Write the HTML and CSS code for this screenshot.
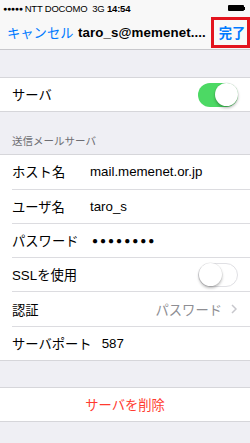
FILE: index.html
```html
<!DOCTYPE html>
<html lang="ja">
<head>
<meta charset="utf-8">
<link rel="stylesheet" href="styles.css">
</head>
<body>
<div class="top">
  <div class="status">
    <span class="dots">●●●●●</span>
    <span class="carrier">NTT DOCOMO&nbsp; 3G <b>14:54</b></span>
    <span class="battery"><span class="batt-body"></span><span class="batt-nub"></span></span>
  </div>
  <div class="nav">
    <span class="cancel">キャンセル</span>
    <span class="title">taro_s@memenet....</span>
    <span class="done">完了</span>
  </div>
</div>

<div class="gap"></div>
<div class="group">
  <div class="row">
    <span class="label">サーバ</span>
    <span class="toggle on"><span class="knob"></span></span>
  </div>
</div>

<div class="header">送信メールサーバ</div>
<div class="group">
  <div class="row sep"><span class="label">ホスト名</span><span class="value">mail.memenet.or.jp</span></div>
  <div class="row sep"><span class="label">ユーザ名</span><span class="value">taro_s</span></div>
  <div class="row sep"><span class="label">パスワード</span><span class="value dots-pw">●●●●●●●●</span></div>
  <div class="row sep"><span class="label">SSLを使用</span><span class="toggle off"><span class="knob"></span></span></div>
  <div class="row sep"><span class="label">認証</span><span class="detail">パスワード</span><span class="chev"><svg width="6" height="10" viewBox="0 0 6 10"><path d="M1 1l4 4-4 4" fill="none" stroke="#c7c7cc" stroke-width="1.5"/></svg></span></div>
  <div class="row"><span class="label">サーバポート</span><span class="value">587</span></div>
</div>

<div class="gap2"></div>
<div class="group">
  <div class="row center"><span class="delete">サーバを削除</span></div>
</div>
</body>
</html>
```

FILE: styles.css
```css
* { box-sizing: border-box; }
html, body {
  margin: 0;
  padding: 0;
  background: #efeff4;
  font-family: "Liberation Sans", "Noto Sans CJK JP", sans-serif;
  color: #000;
}
body { width: 250px; height: 443px; overflow: hidden; }

.top {
  background: #f8f8f8;
  border-bottom: 1px solid #c8c8cc;
}
.status {
  height: 16px;
  display: flex;
  align-items: center;
  font-size: 9.5px;
  padding: 0 5px 0 3px;
}
.dots { font-size: 7px; letter-spacing: -0.3px; margin-right: 2px; }
.carrier { flex: 1; letter-spacing: -0.2px; }
.carrier b { font-weight: bold; }
.battery { display: flex; align-items: center; }
.batt-body {
  width: 16px; height: 6px;
  background: #000;
  border-radius: 1px;
}
.batt-nub { width: 1.5px; height: 3px; background: #000; }

.nav {
  height: 33px;
  display: flex;
  align-items: center;
  font-size: 13.3px;
  padding-left: 7px;
}
.cancel { color: #007aff; width: 71px; }
.title { font-weight: bold; flex: 1; white-space: nowrap; letter-spacing: 0.1px; }
.done {
  color: #007aff;
  font-weight: bold;
  border: 3px solid #e3141e;
  width: 39px;
  height: 31px;
  display: flex;
  align-items: center;
  justify-content: center;
  padding-left: 3px;
}

.gap { height: 27px; }
.gap2 { height: 26px; }
.group {
  background: #fff;
  border-top: 1px solid #d6d6da;
  border-bottom: 1px solid #d6d6da;
}
.row {
  height: 33.3px;
  display: flex;
  align-items: center;
  padding: 0 12px;
  font-size: 13.3px;
  position: relative;
}
.row.sep {
  height: 34.3px;
  padding-bottom: 1px;
}
.row.sep::after {
  content: "";
  position: absolute;
  left: 12px; right: 0; bottom: 0;
  border-bottom: 1px solid #dcdce0;
}
.label { min-width: 68px; margin-right: 10px; white-space: nowrap; }
.value { flex: 1; }
.dots-pw { font-size: 10px; letter-spacing: 2px; padding-left: 2px; }
.detail { flex: 1; text-align: right; color: #8e8e93; margin-right: 9px; }
.chev { display: flex; margin-right: 1px; }
.center { justify-content: center; }
.delete { color: #ff3b30; }

.header {
  height: 42px;
  display: flex;
  align-items: flex-end;
  padding: 0 12px 6px;
  font-size: 10.5px;
  color: #6d6d72;
}

.toggle {
  margin-left: auto;
  width: 40px; height: 24px;
  border-radius: 12px;
  position: relative;
}
.toggle.on { background: #4cd964; }
.toggle.off { background: #fff; border: 1px solid #e0e0e4; }
.knob {
  position: absolute;
  width: 23px; height: 23px;
  border-radius: 50%;
  background: #fff;
  top: 0.5px;
  box-shadow: 0 2px 3px rgba(0,0,0,0.28), 0 0 0 0.5px rgba(0,0,0,0.08);
}
.toggle.on .knob { right: 0.5px; }
.toggle.off .knob { left: -0.5px; top: -0.5px; }
```
